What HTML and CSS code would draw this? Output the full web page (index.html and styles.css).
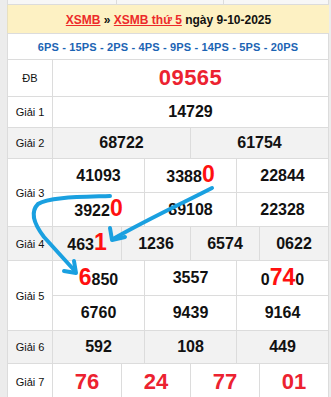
FILE: index.html
```html
<!DOCTYPE html>
<html>
<head>
<meta charset="utf-8">
<link rel="stylesheet" href="styles.css">
</head>
<body>
<div class="page">
  <div class="sliver"><span></span><span></span><span></span></div>
  <div class="title"><a class="lnk">XSMB</a> » <a class="lnk">XSMB thứ 5</a> ngày 9-10-2025</div>
  <div class="ps">6PS - 15PS - 2PS - 4PS - 9PS - 14PS - 5PS - 20PS</div>
  <table class="kq">
    <colgroup>
      <col class="lab">
      <col><col><col><col><col><col><col><col><col><col><col><col>
    </colgroup>
    <tr class="r-db">
      <td class="label">ĐB</td>
      <td colspan="12" class="db">09565</td>
    </tr>
    <tr class="r-g1">
      <td class="label">Giải 1</td>
      <td colspan="12">14729</td>
    </tr>
    <tr class="r-g2 gray">
      <td class="label">Giải 2</td>
      <td colspan="6">68722</td>
      <td colspan="6">61754</td>
    </tr>
    <tr class="r-g3">
      <td class="label" rowspan="2">Giải 3</td>
      <td colspan="4">41093</td>
      <td colspan="4">3388<span class="hl">0</span></td>
      <td colspan="4">22844</td>
    </tr>
    <tr class="r-g3">
      <td colspan="4">3922<span class="hl">0</span></td>
      <td colspan="4">89108</td>
      <td colspan="4">22328</td>
    </tr>
    <tr class="r-g4 gray">
      <td class="label">Giải 4</td>
      <td colspan="3">463<span class="hl">1</span></td>
      <td colspan="3">1236</td>
      <td colspan="3">6574</td>
      <td colspan="3">0622</td>
    </tr>
    <tr class="r-g5">
      <td class="label" rowspan="2">Giải 5</td>
      <td colspan="4"><span class="hl">6</span>850</td>
      <td colspan="4">3557</td>
      <td colspan="4">0<span class="hl">74</span>0</td>
    </tr>
    <tr class="r-g5">
      <td colspan="4">6760</td>
      <td colspan="4">9439</td>
      <td colspan="4">9164</td>
    </tr>
    <tr class="r-g6 gray">
      <td class="label">Giải 6</td>
      <td colspan="4">592</td>
      <td colspan="4">108</td>
      <td colspan="4">449</td>
    </tr>
    <tr class="r-g7">
      <td class="label">Giải 7</td>
      <td colspan="3" class="g7">76</td>
      <td colspan="3" class="g7">24</td>
      <td colspan="3" class="g7">77</td>
      <td colspan="3" class="g7">01</td>
    </tr>
  </table>
  <svg class="arrows" width="331" height="397" viewBox="0 0 331 397">
    <g fill="none" stroke="#1aa0e0" stroke-width="4" stroke-linecap="round" stroke-linejoin="round">
      <path d="M212,188 C185,202 150,218 113,239"/>
      <path d="M110,228 L112,240 L125,237"/>
      <path d="M110,196 C80,197 48,197 38,204 C30,212 34,224 44,237 L74,270"/>
      <path d="M74,261 L76,273 L64,271"/>
    </g>
  </svg>
</div>
</body>
</html>
```

FILE: styles.css
```css
html, body {
  margin: 0;
  padding: 0;
  background: #ececec;
}
.page {
  position: relative;
  width: 331px;
  height: 397px;
  overflow: hidden;
  box-sizing: border-box;
  padding: 0 2px 0 7px;
  font-family: "Liberation Sans", Arial, sans-serif;
}
.sliver {
  display: grid;
  grid-template-columns: 108px 107px 1fr;
  height: 4px;
  border: 1px solid #dcdcdc;
  border-top: none;
  background: #f7f7f7;
}
.sliver span + span {
  border-left: 1px solid #dcdcdc;
}
.title {
  height: 28px;
  line-height: 30px;
  background: #fdf1c3;
  text-align: center;
  font-size: 12px;
  font-weight: bold;
  color: #111;
  border-left: 1px solid #e8e0c0;
}
.lnk {
  color: #ec2a2a;
  text-decoration: underline;
}
.ps {
  height: 25px;
  line-height: 26px;
  background: #fff;
  text-align: center;
  font-size: 11px;
  font-weight: bold;
  color: #1c64b4;
  letter-spacing: 0.15px;
  border: 1px solid #dcdcdc;
  border-bottom: none;
}
.kq {
  width: 322px;
  border-collapse: collapse;
  table-layout: fixed;
  background: #fff;
}
.kq col.lab {
  width: 45px;
}
.kq td {
  border: 1px solid #dcdcdc;
  text-align: center;
  padding: 0;
  font-size: 16px;
  font-weight: bold;
  color: #111;
  white-space: nowrap;
  line-height: 18px;
}
.kq td.label {
  font-size: 11px;
  font-weight: normal;
  color: #111;
}
.kq tr.gray td {
  background: #f2f2f2;
}
.r-db td { height: 36px; }
.r-g1 td { height: 30px; }
.r-g2 td { height: 30px; }
.r-g3 td { height: 33px; }
.r-g4 td { height: 33px; }
.r-g5 td { height: 34px; }
.r-g6 td { height: 32px; }
.r-g7 td { height: 36px; }
.kq td.db {
  font-size: 22px;
  color: #ec2230;
  letter-spacing: 0.5px;
}
.kq td.g7 {
  font-size: 22px;
  color: #ec2230;
}
.hl {
  color: #ff1010;
  font-size: 23px;
  line-height: 18px;
}
.arrows {
  position: absolute;
  left: 0;
  top: 0;
  pointer-events: none;
}
```
